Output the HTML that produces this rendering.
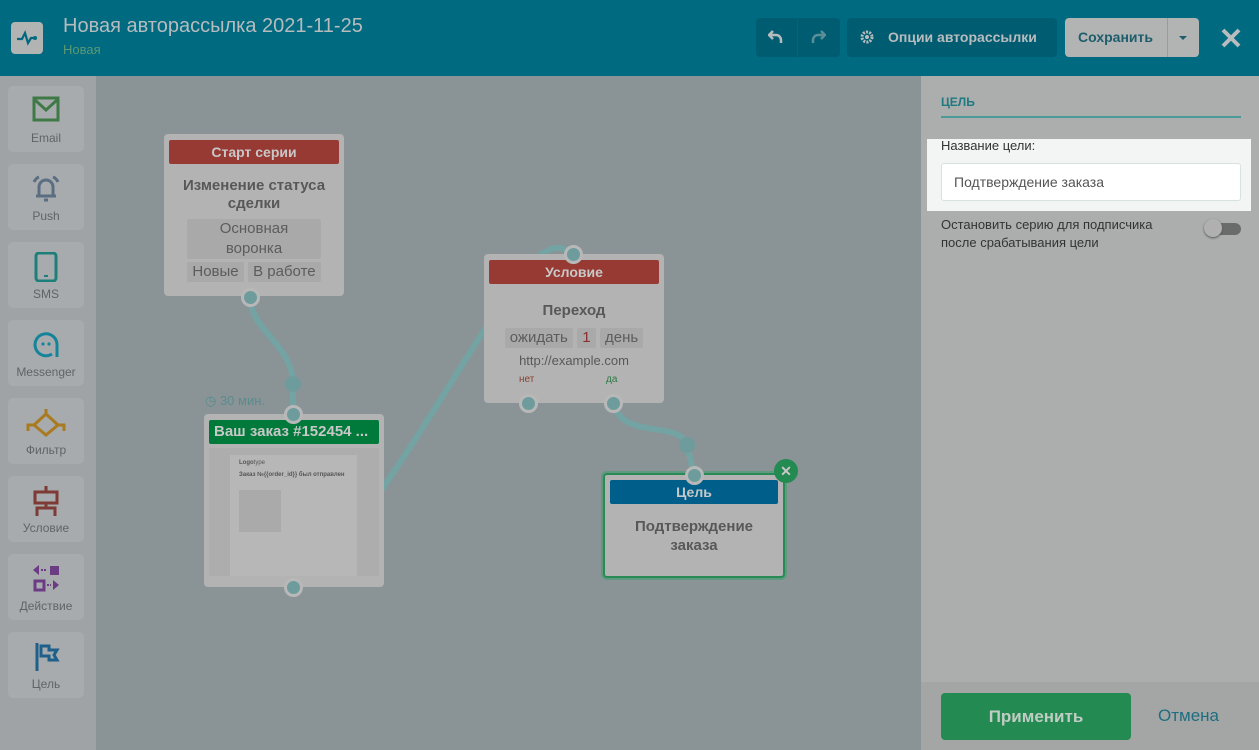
<!DOCTYPE html>
<html><head><meta charset="utf-8"><style>
*{box-sizing:border-box;margin:0;padding:0}
body{width:1259px;height:750px;overflow:hidden;position:relative;font-family:"Liberation Sans",sans-serif;background:#8a9496}
.hdr{position:absolute;left:0;top:0;width:1259px;height:76px;background:#006a80}
.logo{position:absolute;left:11px;top:22px;width:32px;height:32px;background:#b2b4b4;border-radius:4px}
.t1{position:absolute;left:63px;top:15px;font-size:20px;color:#b6bcbe}
.t2{position:absolute;left:63px;top:42px;font-size:13px;color:#5b9a74}
.btn{position:absolute;top:18px;height:39px;border-radius:4px}
.side{position:absolute;left:0;top:76px;width:96px;height:674px;background:#9fa3a5}
.it{position:absolute;left:8px;width:76px;height:66px;background:#a7abad;border-radius:5px;text-align:center;font-size:12px;color:#5f6466}
.it svg{position:absolute;left:50%;top:10px;transform:translateX(-50%)}
.it span{position:absolute;left:0;right:0;top:45px}
.panel{position:absolute;left:921px;top:76px;width:338px;height:674px;background:#acaeae}
.foot{position:absolute;left:921px;top:682px;width:338px;height:68px;background:#a4a6a6}
.card{position:absolute;background:#b3b3b3;border-radius:4px;text-align:center;color:#585858}
.cap{margin:6px 5px 0;height:24px;line-height:24px;color:#c8c8c8;font-weight:bold;font-size:14px;border-radius:2px}
.tag{display:inline-block;background:#a9a9a9;border-radius:2px;padding:0 5px;font-size:15px;line-height:20px;color:#5c5c5c}
.dot{position:absolute;width:19px;height:19px;border-radius:50%;background:#6e9c9c;border:3px solid #b8b8b8}
</style></head><body>
<div class="hdr">
<div class="logo"><svg width="32" height="32" viewBox="0 0 32 32"><path d="M6 17h5l3-6 3 10 3-5h3" fill="none" stroke="#00697f" stroke-width="2.2"/><circle cx="24" cy="16" r="2" fill="#00697f"/></svg></div>
<div class="t1">Новая авторассылка 2021-11-25</div>
<div class="t2">Новая</div>
<div class="btn" style="left:756px;width:84px;background:#005c70"></div>
<div style="position:absolute;left:797px;top:18px;width:1px;height:39px;background:#00667a"></div>
<svg style="position:absolute;left:768px;top:29px" width="16" height="16"><path d="M5 2L1 6l4 4M1 6h7a5 5 0 015 5v3" fill="none" stroke="#b6bcbe" stroke-width="2.5"/></svg>
<svg style="position:absolute;left:810px;top:29px" width="16" height="16"><path d="M11 2l4 4-4 4M15 6H8a5 5 0 00-5 5v3" fill="none" stroke="#5a8e99" stroke-width="2.5"/></svg>
<div class="btn" style="left:847px;width:210px;background:#005c70;color:#b8bcbe;font-weight:bold;font-size:14px;line-height:39px;padding-left:41px">Опции авторассылки</div>
<svg style="position:absolute;left:860px;top:30px" width="14" height="14"><circle cx="7" cy="7" r="5" fill="none" stroke="#b8bcbe" stroke-width="3" stroke-dasharray="2 1.2"/><circle cx="7" cy="7" r="2" fill="#b8bcbe"/></svg>
<div class="btn" style="left:1065px;width:134px;background:#b2b4b4;color:#1d5d6c;font-weight:bold;font-size:14px;line-height:39px;padding-left:13px">Сохранить</div>
<div style="position:absolute;left:1167px;top:18px;width:1px;height:39px;background:#9a9c9c"></div>
<div style="position:absolute;left:1179px;top:36px;border:4px solid transparent;border-top:4px solid #1d5d6c"></div>
<svg style="position:absolute;left:1221px;top:28px" width="20" height="20"><path d="M2 2l16 16M18 2L2 18" stroke="#b8bcbe" stroke-width="4"/></svg>
</div>
<div class="side">
<div class="it" style="top:10px"><svg width="28" height="26"><rect x="2" y="2" width="24" height="22" fill="none" stroke="#3f7a46" stroke-width="3"/><path d="M3 4l11 10 11-10" fill="none" stroke="#3f7a46" stroke-width="3"/></svg><span>Email</span></div>
<div class="it" style="top:88px"><svg width="32" height="30"><path d="M9 22V13a7 7 0 0114 0v9M6 22h20M14 26h4M4 8q2-4 5-5M28 8q-2-4-5-5" fill="none" stroke="#5b6d80" stroke-width="3"/></svg><span>Push</span></div>
<div class="it" style="top:166px"><svg width="24" height="30"><rect x="2" y="1" width="20" height="28" rx="3" fill="none" stroke="#1d7f79" stroke-width="3"/><rect x="10" y="23" width="4" height="2" fill="#1d7f79"/></svg><span>SMS</span></div>
<div class="it" style="top:244px"><svg width="28" height="30"><path d="M20 24A11 11 0 1125 14v13" fill="none" stroke="#15849b" stroke-width="3"/><circle cx="11" cy="14" r="1.6" fill="#15849b"/><circle cx="17" cy="14" r="1.6" fill="#15849b"/></svg><span>Messenger</span></div>
<div class="it" style="top:322px"><svg width="44" height="30"><path d="M22 1v5L10 17l12 10 12-10L22 6M10 17H4v6M34 17h6v6" fill="none" stroke="#a97a1f" stroke-width="3"/></svg><span>Фильтр</span></div>
<div class="it" style="top:400px"><svg width="34" height="32"><path d="M17 0v5" stroke="#7e3a35" stroke-width="3"/><rect x="6" y="6" width="22" height="11" fill="none" stroke="#7e3a35" stroke-width="3"/><path d="M17 17v5M8 30v-8h18v8" fill="none" stroke="#7e3a35" stroke-width="3"/></svg><span>Условие</span></div>
<div class="it" style="top:478px"><svg width="30" height="30"><rect x="19" y="2" width="9" height="9" fill="#6b3b84"/><rect x="4" y="17" width="9" height="9" fill="none" stroke="#6b3b84" stroke-width="3"/><path d="M2 6l6-5v10zM28 21l-6-5v10z" fill="#6b3b84"/><path d="M10 6h6M16 21h4" stroke="#6b3b84" stroke-width="2" stroke-dasharray="2 1"/></svg><span>Действие</span></div>
<div class="it" style="top:556px"><svg width="28" height="30"><path d="M5 1v28" stroke="#1e5f8c" stroke-width="3"/><path d="M9 4h8v4h8l-3 5 3 5h-8v-4H9z" fill="none" stroke="#1e5f8c" stroke-width="3"/></svg><span>Цель</span></div>
</div>
<svg style="position:absolute;left:0;top:0" width="921" height="750">
<g fill="none" stroke="#73a3a3" stroke-width="6" stroke-linecap="round">
<path d="M250 297C250 330 293 345 293 384V414"/>
<path d="M380 492C430 420 470 350 510 290C530 260 555 235 573 255"/>
<path d="M614 403C620 440 680 420 687 445L694 475"/>
</g>
<circle cx="293" cy="384" r="8" fill="#6e9c9c"/><circle cx="687" cy="445" r="8" fill="#6e9c9c"/>
</svg>
<div class="card" style="left:164px;top:134px;width:180px;height:162px">
<div class="cap" style="background:#973a33">Старт серии</div>
<div style="font-weight:bold;font-size:15px;margin-top:13px;line-height:18px">Изменение статуса<br>сделки</div>
<div class="tag" style="display:block;margin:6px 23px 0;line-height:20px">Основная<br>воронка</div>
<div style="margin-top:3px"><span class="tag">Новые</span> <span class="tag">В работе</span></div>
</div>
<div class="dot" style="left:241px;top:288px"></div>
<div style="position:absolute;left:205px;top:393px;font-size:13px;color:#5a8b8d">◷ 30 мин.</div>
<div class="card" style="left:204px;top:414px;width:180px;height:173px">
<div class="cap" style="background:#007a3a;text-align:left;padding-left:5px;font-size:15px">Ваш заказ #152454 ...</div>
<div style="margin:4px 5px 0;height:128px;background:#adadad;position:relative">
<div style="position:absolute;left:21px;top:7px;width:127px;height:121px;background:#b7b7b7;text-align:left;font-size:6px;padding:5px 9px;color:#555">
<b style="font-size:6px">Logo</b>type<br><br><b>Заказ №{{order_id}} был отправлен</b><br><br>
<div style="width:42px;height:42px;background:#aaa;margin-top:6px"></div></div></div>
</div>
<div class="dot" style="left:284px;top:405px"></div>
<div class="dot" style="left:284px;top:578px"></div>
<div class="card" style="left:484px;top:254px;width:180px;height:149px">
<div class="cap" style="background:#973a33">Условие</div>
<div style="font-weight:bold;font-size:15px;margin-top:18px">Переход</div>
<div style="margin-top:9px"><span class="tag">ожидать</span> <span class="tag" style="color:#8a3030">1</span> <span class="tag">день</span></div>
<div style="font-size:13px;margin-top:5px">http://example.com</div>
<div style="font-size:10px;margin-top:6px;position:relative;height:12px"><span style="position:absolute;left:35px;color:#8a4030">нет</span><span style="position:absolute;left:122px;color:#2e7a45">да</span></div>
</div>
<div class="dot" style="left:564px;top:245px"></div>
<div class="dot" style="left:519px;top:394px"></div>
<div class="dot" style="left:604px;top:394px"></div>
<div class="card" style="left:603px;top:473px;width:182px;height:105px;border:2px solid #2a8a55;box-shadow:0 0 0 2px #5d9a80">
<div class="cap" style="background:#005f8a;margin-top:5px">Цель</div>
<div style="font-weight:bold;font-size:15px;margin-top:13px;line-height:19px">Подтверждение<br>заказа</div>
</div>
<div class="dot" style="left:685px;top:466px"></div>
<div style="position:absolute;left:774px;top:459px;width:24px;height:24px;border-radius:50%;background:#238a52;color:#c8c8c8;text-align:center;line-height:24px;font-size:14px;font-weight:bold">✕</div>
<div class="panel">
<div style="position:absolute;left:20px;top:19px;font-size:12px;font-weight:bold;color:#1e7a80">ЦЕЛЬ</div>
<div style="position:absolute;left:20px;top:40px;width:300px;height:2px;background:#4a9a98"></div>
<div style="position:absolute;left:6px;top:63px;width:324px;height:72px;background:#f3f5f4"></div>
<div style="position:absolute;left:20px;top:62px;font-size:13px;color:#333">Название цели:</div>
<div style="position:absolute;left:20px;top:87px;width:300px;height:38px;background:#fff;border:1px solid #d5e2e0;border-radius:3px;font-size:14px;color:#555;line-height:36px;padding-left:12px">Подтверждение заказа</div>
<div style="position:absolute;left:20px;top:140px;font-size:13px;color:#333;line-height:18px">Остановить серию для подписчика<br>после срабатывания цели</div>
<div style="position:absolute;left:286px;top:147px;width:34px;height:12px;border-radius:6px;background:#6a6c6c"></div>
<div style="position:absolute;left:283px;top:143px;width:18px;height:18px;border-radius:50%;background:#b0b0b0;box-shadow:0 1px 2px #555"></div>
</div>
<div class="foot">
<div style="position:absolute;left:20px;top:11px;width:190px;height:47px;background:#238a52;border-radius:4px;color:#c0ccc4;font-weight:bold;font-size:17px;line-height:47px;text-align:center">Применить</div>
<div style="position:absolute;left:237px;top:24px;color:#1e6e80;font-size:17px">Отмена</div>
</div>
</body></html>
